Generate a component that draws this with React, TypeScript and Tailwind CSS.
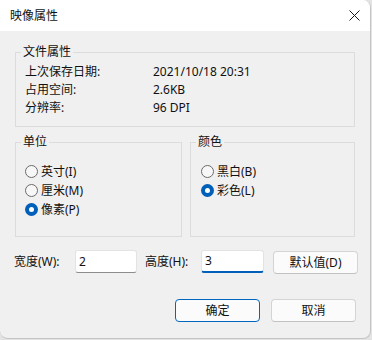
import React from "react"

const font = { fontFamily: '"Noto Sans", "Noto Sans CJK SC", sans-serif' }

function Radio({ label, checked }: { label: string; checked?: boolean }) {
    return (
        <div className="flex h-[19px] items-center gap-[3px]">
            {checked ? (
                <span className="flex h-[13px] w-[13px] items-center justify-center rounded-full bg-[#005fb8]">
                    <span className="h-[5px] w-[5px] rounded-full bg-white" />
                </span>
            ) : (
                <span className="h-[13px] w-[13px] rounded-full border border-[#6b6b6b] bg-[#f7f7f7]" />
            )}
            <span>{label}</span>
        </div>
    )
}

function Group({ title, className, children }: { title: string; className?: string; children: React.ReactNode }) {
    return (
        <fieldset className={"border border-[#dcdcdc] " + (className ?? "")}>
            <legend className="ml-[5px] px-[2px] leading-[16px]">{title}</legend>
            {children}
        </fieldset>
    )
}

function Button({ label, primary }: { label: string; primary?: boolean }) {
    return (
        <button
            className={
                "flex h-[23px] w-[85px] items-center justify-center rounded-[4px] border bg-[#fbfbfb] text-[12px] " +
                (primary ? "border-[#0067c0]" : "border-[#d4d4d4] border-b-[#c2c2c2]")
            }
        >
            {label}
        </button>
    )
}

export default function App() {
    return (
        <div className="h-[340px] w-[372px] bg-[#e3e3e3] text-[12px] text-[#111111]" style={font}>
            <div className="flex h-[339px] w-[371px] flex-col overflow-hidden rounded-tr-[8px] rounded-b-[8px] border-r border-b border-[#c4c4c4] bg-[#f0f0f0]">
                {/* Title bar */}
                <div className="flex h-[31px] items-center justify-between bg-white pl-[10px] pr-[10px]">
                    <span>映像属性</span>
                    <svg width="11" height="11" viewBox="0 0 11 11" className="mr-[0px]">
                        <path d="M0.5 0.5 L10.5 10.5 M10.5 0.5 L0.5 10.5" stroke="#1a1a1a" strokeWidth="1" />
                    </svg>
                </div>

                <div className="flex flex-col px-[15px] pt-[13px]">
                    <Group title="文件属性" className="pb-[9px] pt-[3px]">
                        <div className="flex flex-col pl-[9px] leading-[18px]">
                            <div className="flex"><span className="w-[128px]">上次保存日期:</span><span>2021/10/18 20:31</span></div>
                            <div className="flex"><span className="w-[128px]">占用空间:</span><span>2.6KB</span></div>
                            <div className="flex"><span className="w-[128px]">分辨率:</span><span>96 DPI</span></div>
                        </div>
                    </Group>

                    <div className="mt-[7px] flex gap-[8px]">
                        <Group title="单位" className="w-[167px] pb-[17px] pt-[12px]">
                            <div className="flex flex-col pl-[9px]">
                                <Radio label="英寸(I)" />
                                <Radio label="厘米(M)" />
                                <Radio label="像素(P)" checked />
                            </div>
                        </Group>
                        <Group title="颜色" className="flex-1 pb-[17px] pt-[12px]">
                            <div className="flex flex-col pl-[10px]">
                                <Radio label="黑白(B)" />
                                <Radio label="彩色(L)" checked />
                            </div>
                        </Group>
                    </div>
                </div>

                <div className="mt-[12px] flex items-center pl-[14px]">
                    <span className="w-[61px]">宽度(W):</span>
                    <div className="flex h-[23px] w-[62px] items-center rounded-[3px] border border-[#e3e3e3] border-b-[#8d8d8d] bg-white pl-[3px]">2</div>
                    <span className="ml-[8px] w-[56px]">高度(H):</span>
                    <div className="flex h-[23px] w-[63px] items-center rounded-[3px] border border-[#e3e3e3] border-b-2 border-b-[#005fb8] bg-white pl-[3px]">3</div>
                    <div className="ml-[9px] mt-[2px]">
                        <Button label="默认值(D)" />
                    </div>
                </div>

                <div className="mt-[25px] flex justify-end gap-[11px] pr-[14px]">
                    <Button label="确定" primary />
                    <Button label="取消" />
                </div>
            </div>
        </div>
    )
}
